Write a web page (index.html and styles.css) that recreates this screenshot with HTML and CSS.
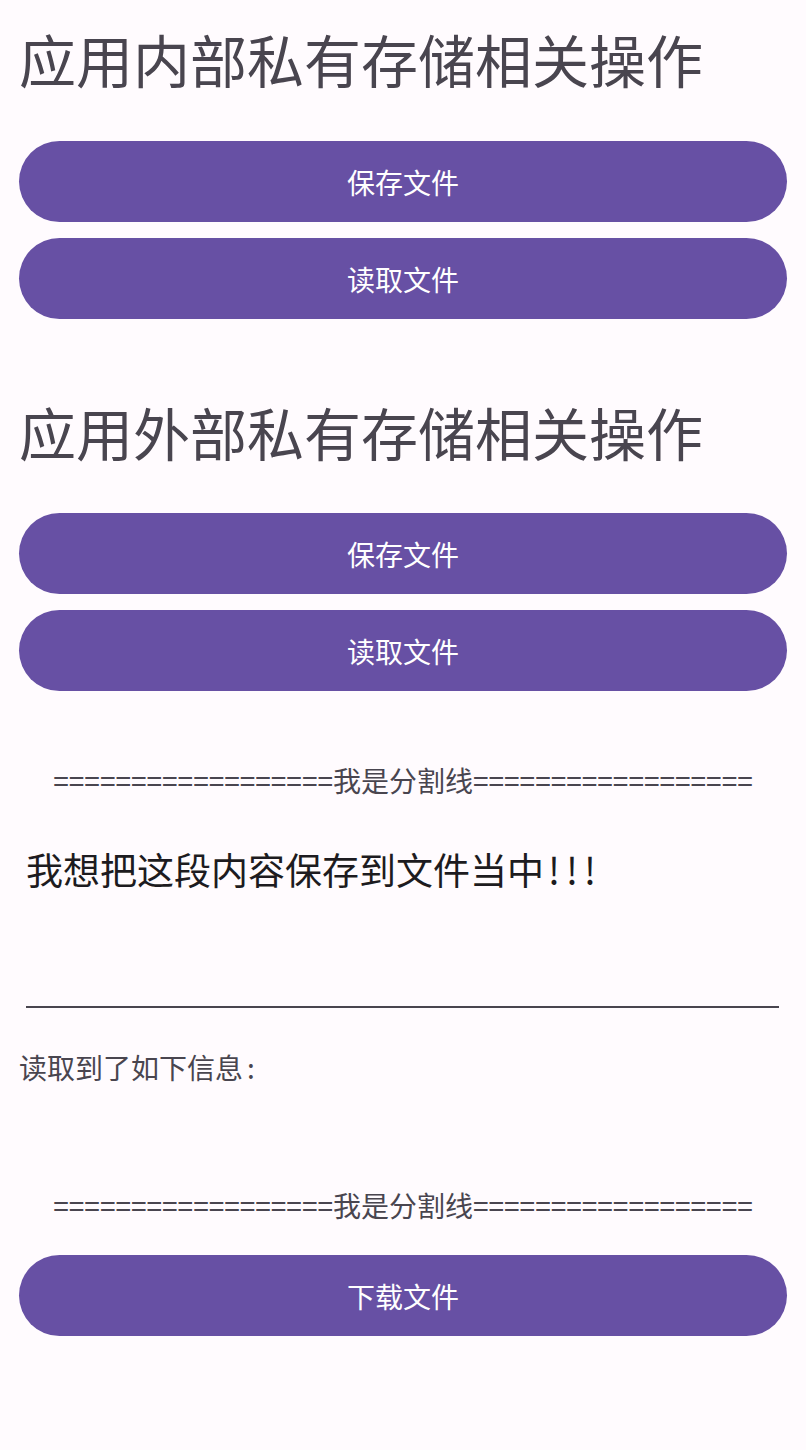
FILE: index.html
```html
<!DOCTYPE html>
<html lang="zh-CN">
<head>
  <meta charset="UTF-8">
  <title>文件存储</title>
  <link rel="stylesheet" href="styles.css">
</head>
<body>
  <div class="page">
    <!-- 内部私有存储 -->
    <h1 class="section-title">应用内部私有存储相关操作</h1>
    <button class="btn">保存文件</button>
    <button class="btn">读取文件</button>

    <!-- 外部私有存储 -->
    <h1 class="section-title second">应用外部私有存储相关操作</h1>
    <button class="btn">保存文件</button>
    <button class="btn">读取文件</button>

    <p class="divider first">==================我是分割线==================</p>

    <!-- 输入框 -->
    <div class="edit-box">我想把这段内容保存到文件当中<span class="bang">!!!</span></div>

    <p class="read-label">读取到了如下信息<span class="colon">:</span></p>

    <p class="divider second">==================我是分割线==================</p>

    <button class="btn download">下载文件</button>
  </div>
</body>
</html>
```

FILE: styles.css
```css
/* 基础重置 */
* {
  box-sizing: border-box;
  margin: 0;
  padding: 0;
}

body {
  background-color: #fffbfe;
  font-family: "Noto Sans CJK SC", "Noto Sans", sans-serif;
  width: 806px;
  min-height: 1450px;
}

.page {
  display: flex;
  flex-direction: column;
  padding: 18px 19px 0;
}

.section-title {
  font-size: 57px;
  font-weight: 400;
  line-height: 80px;
  color: #49454f;
  margin-bottom: 43px;
  white-space: nowrap;
}

.section-title.second {
  margin-top: 56px;
  margin-bottom: 42px;
}

/* 圆角按钮 */
.btn {
  height: 81px;
  border: none;
  border-radius: 41px;
  background-color: #6750a4;
  color: #fff;
  font-family: inherit;
  font-size: 28px;
  margin-bottom: 16px;
  cursor: pointer;
}

.divider {
  font-size: 28px;
  line-height: 40px;
  color: #49454f;
  text-align: center;
  white-space: nowrap;
}

.divider.first {
  margin-top: 53px;
}

.divider.second {
  margin-top: 98px;
}

.edit-box {
  margin: 43px 8px 0 7px;
  height: 165px;
  border-bottom: 2px solid #49454f;
  font-size: 37px;
  line-height: 52px;
  color: #1d1b20;
}

.bang {
  letter-spacing: 6px;
  margin-left: 4px;
}

.read-label {
  margin-top: 39px;
  font-size: 28px;
  line-height: 40px;
  color: #49454f;
}

.colon {
  margin-left: 4px;
}

.btn.download {
  margin-top: 30px;
}
```
